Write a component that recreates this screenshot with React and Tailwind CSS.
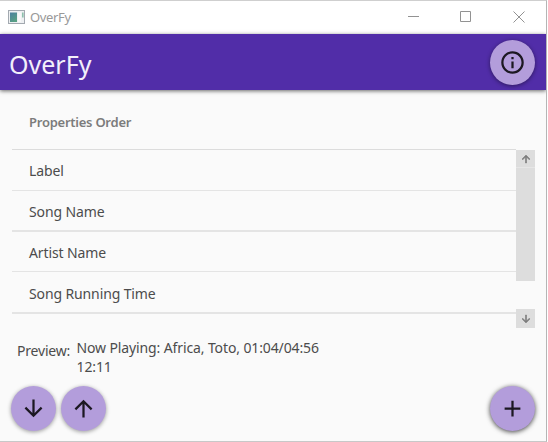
import React from "react";

const ARROW_DOWN = "M11,4H13V16L18.5,10.5L19.92,11.92L12,19.84L4.08,11.92L5.5,10.5L11,16V4Z";
const ARROW_UP = "M13,20H11V8L5.5,13.5L4.08,12.08L12,4.16L19.92,12.08L18.5,13.5L13,8V20Z";
const PLUS = "M19,13H13V19H11V13H5V11H11V5H13V11H19V13Z";
const INFO =
  "M11,9H13V7H11M12,20C7.59,20 4,16.41 4,12C4,7.59 7.59,4 12,4C16.41,4 20,7.59 20,12C20,16.41 16.41,20 12,20M12,2A10,10 0 0,0 2,12A10,10 0 0,0 12,22A10,10 0 0,0 22,12A10,10 0 0,0 12,2M11,17H13V11H11V17Z";

function Icon({ d, className }) {
  return (
    <svg viewBox="0 0 24 24" className={className} fill="currentColor">
      <path d={d} />
    </svg>
  );
}

function Fab({ icon, label, className = "" }) {
  return (
    <button
      aria-label={label}
      className={`flex size-[45px] shrink-0 items-center justify-center rounded-full bg-[#b39ddb] text-[#1c1822] ${className}`}
    >
      <Icon d={icon} className="size-[27px]" />
    </button>
  );
}

function TitleBar() {
  return (
    <div className="flex h-[33px] items-center bg-white pl-2 text-[#999]">
      <svg viewBox="0 0 17 14" className="mb-[2px] h-[14px] w-[17px] shrink-0">
        <defs>
          <linearGradient id="pane" x1="0" y1="0" x2="0.6" y2="1">
            <stop offset="0" stopColor="#4c7fa0" />
            <stop offset="1" stopColor="#58a083" />
          </linearGradient>
        </defs>
        <rect x="0.5" y="0.5" width="16" height="13" fill="#eef0f2" stroke="#a3a9b0" />
        <rect x="2" y="2.5" width="7" height="9.5" fill="url(#pane)" />
        <rect x="10" y="2.5" width="3" height="9.5" fill="#f8f8f8" />
        <rect x="14" y="2.5" width="1.6" height="5" fill="#8dc0ac" />
      </svg>
      <span className="ml-[5px] text-[13px] leading-none tracking-[-0.35px]">OverFy</span>
      <svg viewBox="0 0 118 12" className="mr-[20px] mb-[2px] ml-auto h-3 w-[118px]" fill="none" stroke="#929292">
        <path d="M0 5.5H11M52.5 .5h10v10h-10zM105.5 .5l11 11M116.5 .5l-11 11" />
      </svg>
    </div>
  );
}

const rows = [
  ["Label", "h-[41px] border-b-[1.5px] pt-px"],
  ["Song Name", "h-[41px] border-b-2 pt-[2px]"],
  ["Artist Name", "h-[40px] border-b-[1.5px] pt-[2px]"],
  ["Song Running Time", "h-[42px] border-b-2 pt-[2px]"],
];

export default function App() {
  return (
    <div className="flex h-[442px] w-[547px] flex-col overflow-hidden border-t border-r border-b border-t-[#cfcfcf] border-r-[#b5b5b5] border-b-[#c8c8c8] bg-[#fafafa] font-['Noto_Sans','Open_Sans',sans-serif] text-[#4c4c4c]">
      <TitleBar />
      <header className="z-10 flex h-14 shrink-0 items-center justify-between bg-[#512da8] pr-[11px] pl-[9px] text-[#f3effa] shadow-[0_1px_4px_rgba(0,0,0,0.6)]">
        <h1 className="pt-1 text-[25px] leading-none">OverFy</h1>
        <Fab icon={INFO} label="About" className="shadow-[0_1px_4px_rgba(0,0,0,0.45)]" />
      </header>
      <main className="flex flex-1 flex-col pl-3">
        <div className="flex h-[60px] w-[504px] items-center border-b border-[#dcdcdc] pt-[7px] pl-[17px] text-[13px] font-semibold tracking-[-0.25px] text-[#7c7c7c]">
          Properties Order
        </div>
        <div className="flex h-[178px]">
          <ul className="w-[504px]">
            {rows.map(([name, cls]) => (
              <li key={name} className={`flex items-center border-[#e4e4e4] pl-[17px] text-[14px] tracking-[-0.12px] ${cls}`}>
                {name}
              </li>
            ))}
          </ul>
          <div className="flex w-[19px] flex-col justify-between text-[#7c7c7c]">
            <div className="h-[131px] bg-[#dddddd]">
              <div className="flex h-[18px] items-center justify-center border-b border-[#e6e6e6]">
                <Icon d={ARROW_UP} className="mt-px size-3 stroke-current stroke-[1.2]" />
              </div>
            </div>
            <div className="flex h-[19px] items-center justify-center bg-[#dddddd]">
              <Icon d={ARROW_DOWN} className="size-3 stroke-current stroke-[1.2]" />
            </div>
          </div>
        </div>
        <div className="flex pt-[10px] pl-[5px] text-[14px] leading-[19px] tracking-[-0.12px]">
          <span className="w-[59.5px] shrink-0 pt-[3px] tracking-[-0.2px]">Preview:</span>
          <span className="w-[260px]">Now Playing: Africa, Toto, 01:04/04:56 12:11</span>
        </div>
        <div className="mt-auto mb-[10px] -ml-[1px] flex gap-[5px] pr-[11px]">
          <Fab icon={ARROW_DOWN} label="Move down" className="shadow-[0_1px_4px_rgba(0,0,0,0.4)]" />
          <Fab icon={ARROW_UP} label="Move up" className="shadow-[0_1px_4px_rgba(0,0,0,0.4)]" />
          <Fab icon={PLUS} label="Add" className="ml-auto shadow-[0_1px_5px_rgba(0,0,0,0.75)]" />
        </div>
      </main>
    </div>
  );
}
